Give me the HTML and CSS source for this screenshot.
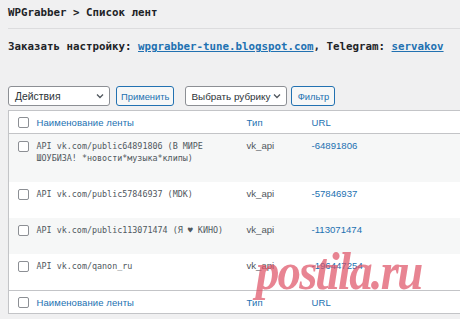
FILE: index.html
```html
<!DOCTYPE html>
<html lang="ru">
<head>
  <meta charset="UTF-8">
  <meta name="viewport" content="width=device-width, initial-scale=1">
  <title>WPGrabber - Список лент</title>
  <link rel="stylesheet" href="styles.css">
</head>
<body>
  <div class="wrap">
    <h1 class="page-title">WPGrabber &gt; Список лент</h1>
    <p class="promo">Заказать настройку: <a href="#">wpgrabber-tune.blogspot.com</a>, Telegram: <a href="#">servakov</a></p>

    <!-- панель действий -->
    <div class="tablenav">
      <div class="select select-actions">
        <span>Действия</span>
        <svg width="8" height="6" viewBox="0 0 8 6"><path d="M1 1.5 L4 4.5 L7 1.5" fill="none" stroke="#50575e" stroke-width="1.3"/></svg>
      </div>
      <button type="button" class="btn">Применить</button>
      <div class="select select-cat">
        <span>Выбрать рубрику</span>
        <svg width="8" height="6" viewBox="0 0 8 6"><path d="M1 1.5 L4 4.5 L7 1.5" fill="none" stroke="#50575e" stroke-width="1.3"/></svg>
      </div>
      <button type="button" class="btn btn-filter">Фильтр</button>
    </div>

    <table class="feeds">
      <colgroup>
        <col class="col-cb">
        <col class="col-title">
        <col class="col-type">
        <col>
      </colgroup>
      <thead>
        <tr><th><span class="cb"></span></th><th>Наименование ленты</th><th>Тип</th><th>URL</th></tr>
      </thead>
      <tbody>
        <tr class="alt">
          <td><span class="cb"></span></td>
          <td class="name">API vk.com/public64891806 (В МИРЕ ШОУБИЗА! *новости*музыка*клипы)</td>
          <td class="type">vk_api</td>
          <td class="url"><a href="#">-64891806</a></td>
        </tr>
        <tr>
          <td><span class="cb"></span></td>
          <td class="name">API vk.com/public57846937 (MDK)</td>
          <td class="type">vk_api</td>
          <td class="url"><a href="#">-57846937</a></td>
        </tr>
        <tr class="alt">
          <td><span class="cb"></span></td>
          <td class="name">API vk.com/public113071474 (Я ♥ КИНО)</td>
          <td class="type">vk_api</td>
          <td class="url"><a href="#">-113071474</a></td>
        </tr>
        <tr>
          <td><span class="cb"></span></td>
          <td class="name">API vk.com/qanon_ru</td>
          <td class="type">vk_api</td>
          <td class="url"><a href="#">-196447254</a></td>
        </tr>
      </tbody>
      <tfoot>
        <tr><th><span class="cb"></span></th><th>Наименование ленты</th><th>Тип</th><th>URL</th></tr>
      </tfoot>
    </table>
  </div>
  <span class="watermark">postila.ru</span>
</body>
</html>
```

FILE: styles.css
```css
/* база */
body { margin: 0; background: #f0f0f1; color: #3c434a; font-family: 'Liberation Sans', sans-serif; overflow: hidden; }
.wrap { padding-left: 8px; }
a { color: #2271b1; }

/* заголовок */
.page-title { margin: 0; padding: 6px 0 9px; font: bold 10.8px/13px 'DejaVu Sans Mono', monospace; color: #1d2327; border-bottom: 1px solid #dcdcde; }
.promo { margin: 11px 0 32px; font: bold 10.8px/14px 'DejaVu Sans Mono', monospace; color: #1d2327; }

/* панель */
.tablenav { display: flex; height: 20px; margin-bottom: 4px; }
.select { box-sizing: border-box; height: 20px; display: flex; align-items: center; justify-content: space-between; padding: 0 5px 0 6px; background: #fff; border: 1px solid #8c8f94; border-radius: 3px; font-size: 10.4px; color: #2c3338; white-space: nowrap; }
.select-actions { width: 102px; }
.select-cat { width: 102px; margin-left: 11px; padding-left: 5px; font-size: 9.9px; }
.btn { box-sizing: border-box; height: 20px; margin-left: 6px; padding: 0 4px; background: #f6f7f7; border: 1px solid #2271b1; border-radius: 3px; color: #2271b1; font: 9.4px 'Liberation Sans', sans-serif; white-space: nowrap; }
.btn-filter { width: 44px; margin-left: 4px; padding: 0; }

/* таблица */
.feeds { width: calc(100% + 10px); table-layout: fixed; border-collapse: collapse; background: #fff; border: 1px solid #c3c4c7; box-shadow: 0 1px 1px rgba(0,0,0,0.04); }
.col-cb { width: 28px; }
.col-title { width: 210px; }
.col-type { width: 65px; }
.feeds th { height: 22px; padding: 0; text-align: left; font-weight: normal; font-size: 9.5px; letter-spacing: 0.1px; color: #2271b1; }
.feeds thead tr { border-bottom: 1px solid #c3c4c7; }
.feeds tfoot tr { border-top: 1px solid #c3c4c7; }
.feeds td { padding: 6px 10px 18px 0; vertical-align: top; line-height: 12px; }
.feeds td:first-child, .feeds th:first-child { padding-left: 9px; }
.feeds tr.alt td { background: #f6f7f7; }
.name { font: 8.4px/12px 'DejaVu Sans Mono', monospace; color: #50575e; }
.type { font-size: 9.6px; color: #50575e; }
.url { font-size: 9.6px; }
.url a { text-decoration: none; }

.cb { display: block; box-sizing: border-box; width: 11px; height: 11px; background: #fff; border: 1px solid #8c8f94; border-radius: 2px; }
.feeds th .cb { margin-top: 1px; }
.feeds td .cb { margin-top: 1px; }

/* водяной знак */
.watermark { position: absolute; left: 256px; top: 246px; font: italic bold 52px/1 'Liberation Serif', serif; letter-spacing: -2px; color: rgba(222, 80, 100, 0.7); transform: scaleX(0.9); transform-origin: left top; }
```
